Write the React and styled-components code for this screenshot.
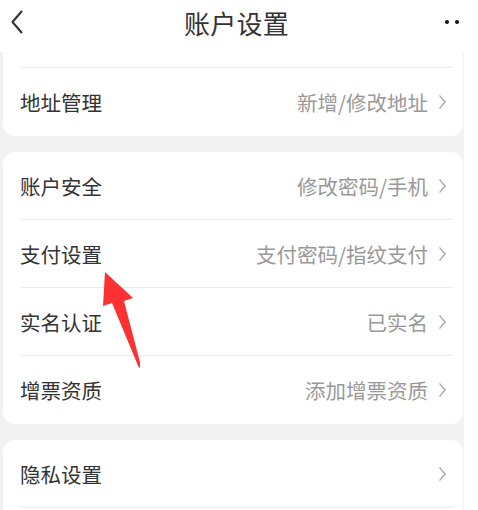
import React from "react";
import styled, { createGlobalStyle } from "styled-components";

const groups = [
  { cut: true, rows: [{ label: "地址管理", value: "新增/修改地址" }] },
  {
    rows: [
      { label: "账户安全", value: "修改密码/手机" },
      { label: "支付设置", value: "支付密码/指纹支付" },
      { label: "实名认证", value: "已实名" },
      { label: "增票资质", value: "添加增票资质" }
    ]
  },
  { rows: [{ label: "隐私设置", value: "" }, { label: "", value: "" }] }
];

const Chevron = ({ size = 14, color = "#a8a8a8", width = 1.6, left }) => (
  <svg width={size / 2} height={size} viewBox="0 0 8 16" fill="none">
    <path
      d={left ? "M7 1 L1 8 L7 15" : "M1 1 L7 8 L1 15"}
      stroke={color}
      strokeWidth={width}
      strokeLinecap="round"
      strokeLinejoin="round"
    />
  </svg>
);

const App = () => {
  return (
    <>
      <GlobalStyle />
      <Page>
        <Header>
          <BackButton>
            <Chevron size={24} color="#333" width={1.4} left />
          </BackButton>
          <Title>账户设置</Title>
          <More>
            <Dot />
            <Dot />
          </More>
        </Header>
        <Body>
          {groups.map((group, gi) => (
            <Card key={gi} $cut={group.cut}>
              {group.cut && <Spacer />}
              {group.rows.map((row, ri) => (
                <Row key={ri}>
                  <Label>{row.label}</Label>
                  {row.label && (
                    <Right>
                      {row.value && <Value>{row.value}</Value>}
                      <Chevron />
                    </Right>
                  )}
                </Row>
              ))}
            </Card>
          ))}
          <Pointer width="50" height="100" viewBox="0 0 50 100">
            <polygon
              points="15,0 43,26 34,29 51,94 49,96 22,31 13,34"
              fill="#fa3232"
            />
          </Pointer>
        </Body>
      </Page>
    </>
  );
};

export default App;

const GlobalStyle = createGlobalStyle`
  html, body {
    margin: 0;
    background: #fff;
    height: 510px;
    overflow: hidden;
  }
  body {
    font-family: "Noto Sans CJK SC", "Noto Sans", sans-serif;
  }
`;

const Page = styled.div`
  width: 464px;
  height: 510px;
  background: #f2f2f2;
  overflow: hidden;
`;

const Header = styled.div`
  height: 52px;
  padding-bottom: 8px;
  box-sizing: border-box;
  background: #fff;
  display: flex;
  align-items: center;
  justify-content: space-between;
`;

const BackButton = styled.div`
  width: 40px;
  padding-left: 11px;
  display: flex;
  align-items: center;
`;

const Title = styled.div`
  font-size: 26px;
  color: #333;
  letter-spacing: 0.3px;
  margin-left: 3px;
`;

const More = styled.div`
  width: 40px;
  display: flex;
  justify-content: flex-end;
  gap: 6px;
  padding-right: 5px;
`;

const Dot = styled.span`
  width: 4px;
  height: 4px;
  border-radius: 50%;
  background: #111;
`;

const Body = styled.div`
  display: flex;
  flex-direction: column;
  gap: 16px;
  padding: 0 1px 0 3px;
  position: relative;
`;

const Card = styled.div`
  background: #fff;
  border-radius: ${props => (props.$cut ? "0 0 12px 12px" : "12px")};
  padding: 0 10px 0 17px;
`;

const Spacer = styled.div`
  height: 16px;
  border-bottom: 1px solid #ececec;
  box-sizing: border-box;
`;

const Row = styled.div`
  height: 68px;
  display: flex;
  align-items: center;
  justify-content: space-between;
  position: relative;

  & + &::before {
    content: "";
    position: absolute;
    left: 0;
    right: 0;
    top: -1px;
    height: 1px;
    background: #ececec;
  }
`;

const Label = styled.span`
  font-size: 20.5px;
  color: #333;
`;

const Right = styled.div`
  display: flex;
  align-items: center;
  gap: 11px;
  padding-right: 7px;
`;

const Value = styled.span`
  font-size: 20.5px;
  color: #999;
`;

const Pointer = styled.svg`
  position: absolute;
  left: 90px;
  top: 220px;
`;
